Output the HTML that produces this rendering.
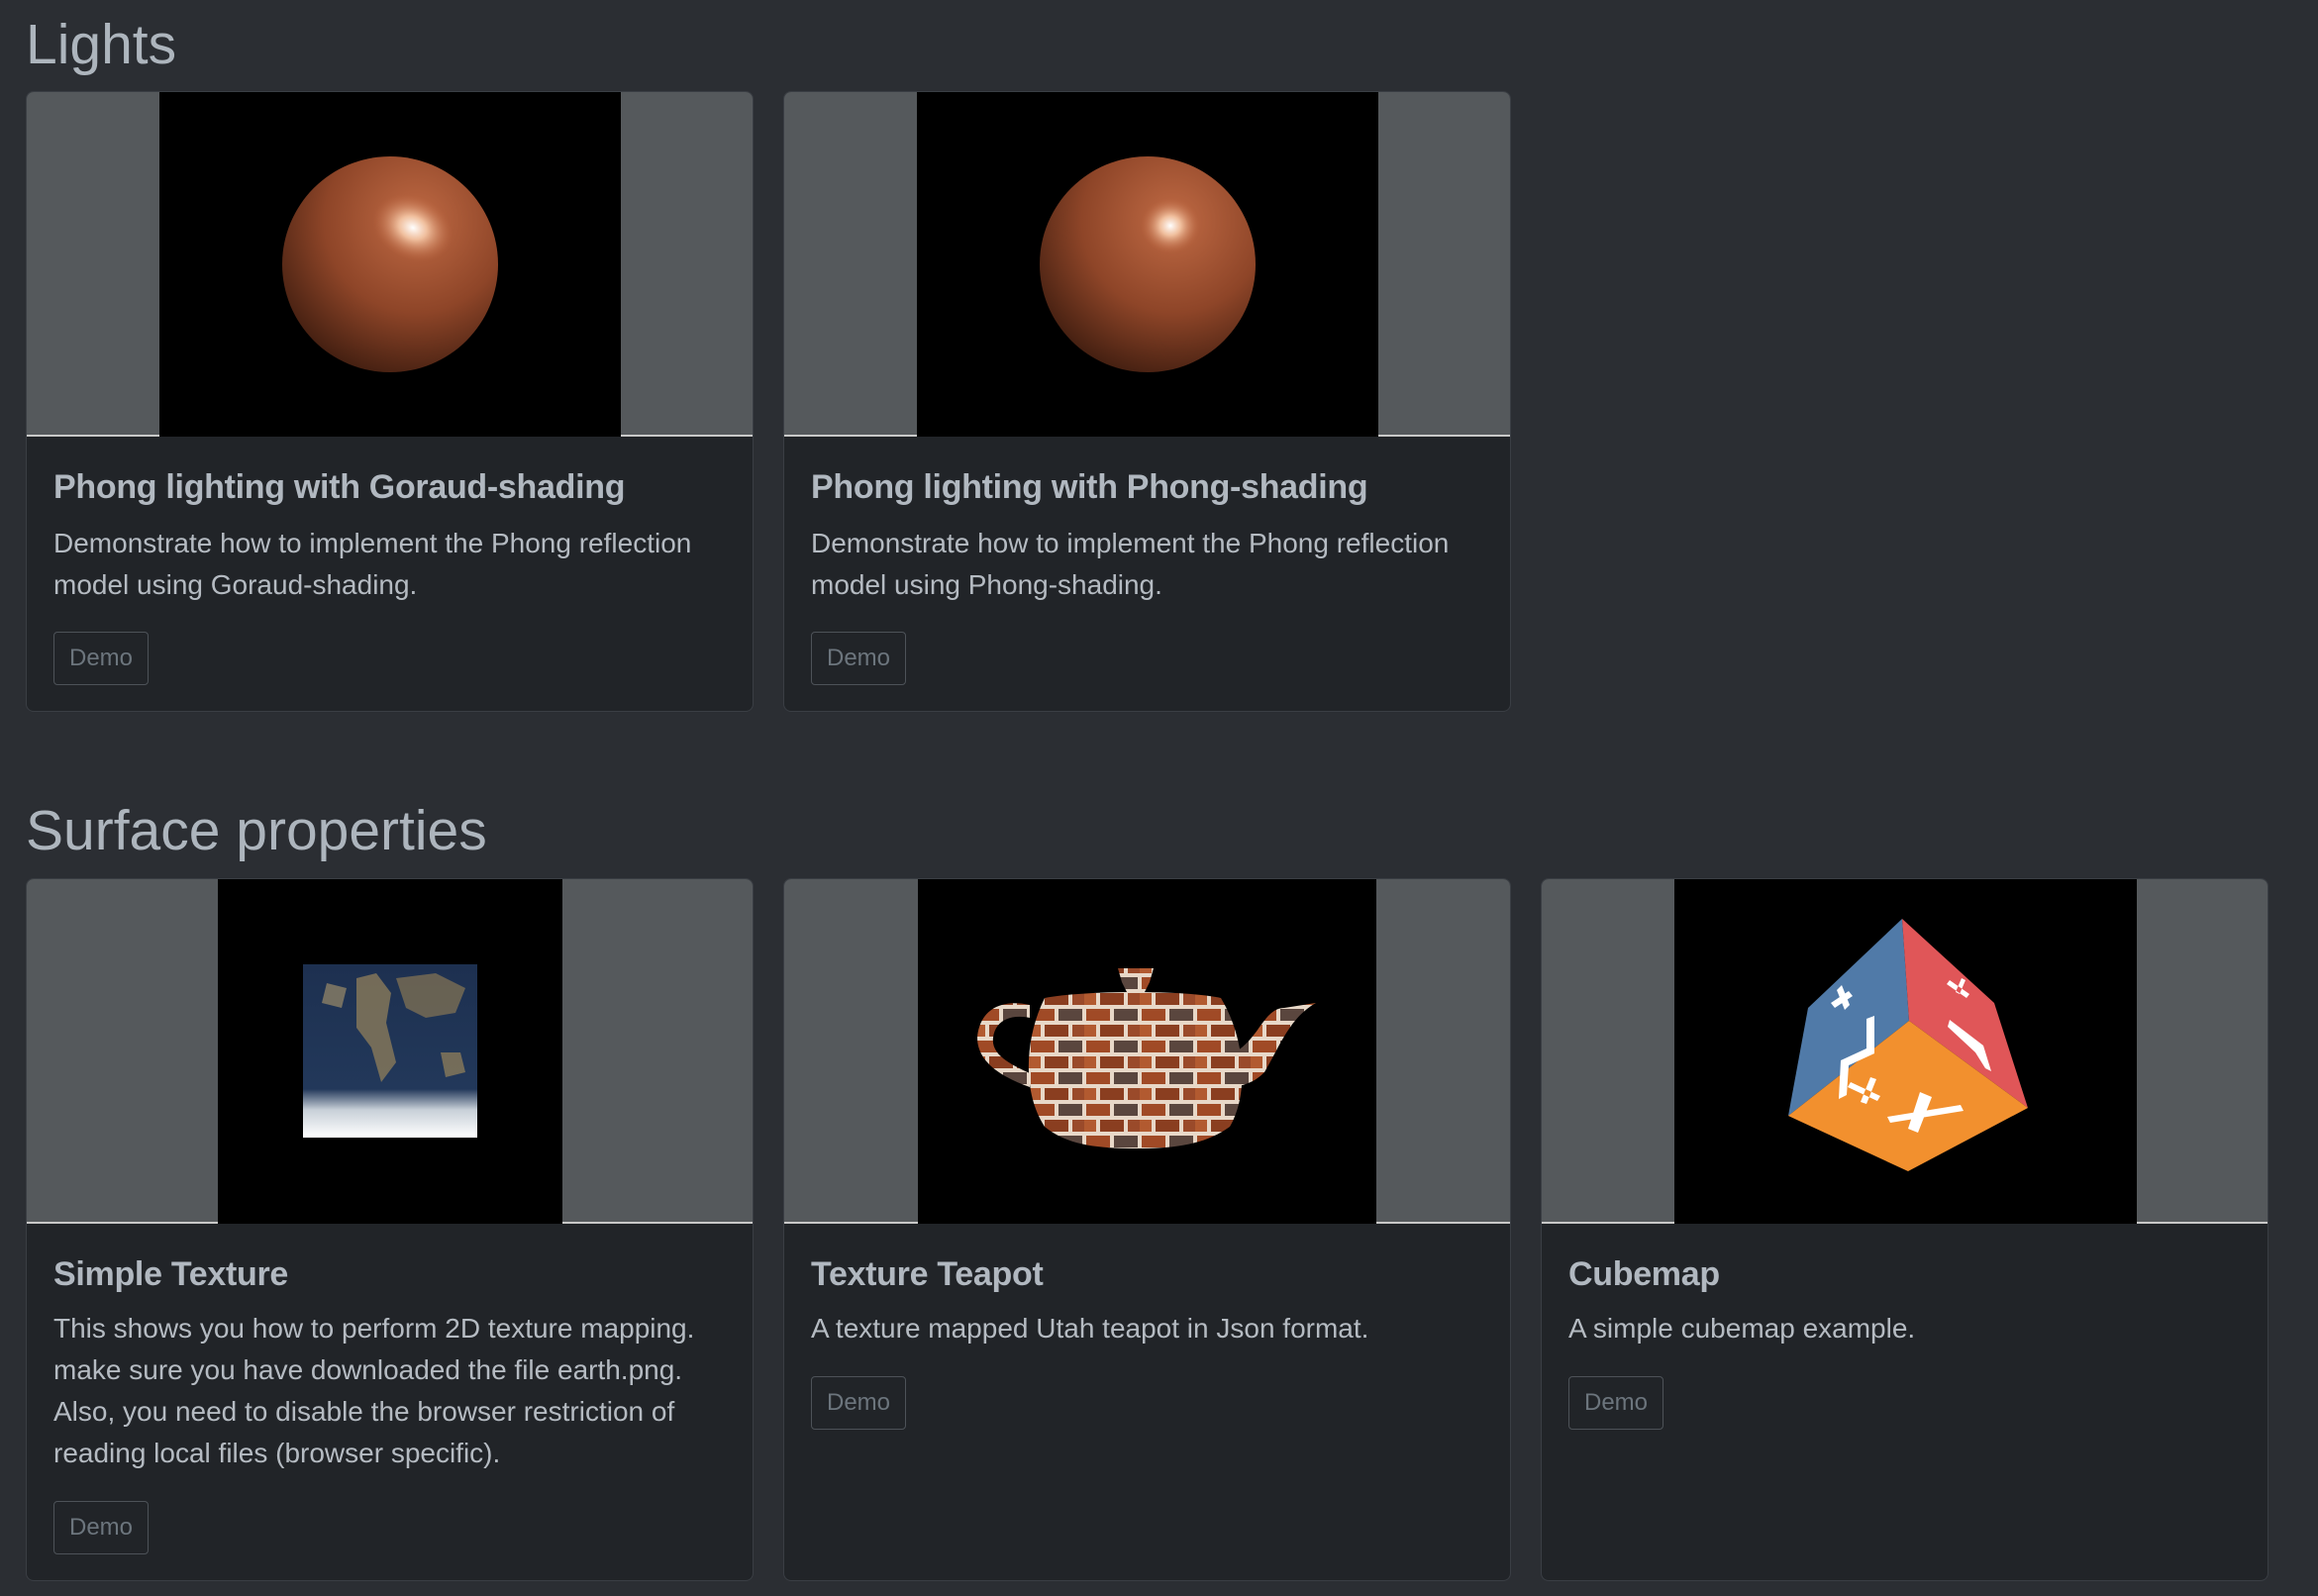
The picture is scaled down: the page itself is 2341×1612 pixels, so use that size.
<!DOCTYPE html>
<html><head><meta charset="utf-8"><style>
*{margin:0;padding:0;box-sizing:border-box}
body{width:2341px;height:1612px;background:#2b2e33;font-family:"Liberation Sans",sans-serif;position:relative;overflow:hidden}
h2{position:absolute;left:26px;color:#adb5bd;font-weight:normal;font-size:57px;line-height:1}
.card{position:absolute;width:735px;background:#212428;border:1px solid #3a3e44;border-radius:8px;overflow:hidden}
.img{position:relative;height:348px;background:#55595c;border-bottom:2px solid #c8c8c8}
.img svg{position:absolute;top:0;height:348px;background:#000}
.t{position:absolute;left:27px;color:#b1b8c0;font-size:34px;font-weight:bold;letter-spacing:-0.3px;white-space:nowrap}
.d{position:absolute;left:27px;width:665px;color:#b5bbc2;font-size:28px;line-height:42px}
.b{position:absolute;left:27px;width:96px;height:54px;border:1.5px solid #4d5258;border-radius:4px;color:#6c757d;font-size:24px;text-align:center;line-height:51px}
</style></head><body>
<svg width="0" height="0" style="position:absolute">
<defs>
<radialGradient id="sp" cx="0.62" cy="0.3" r="0.85"><stop offset="0" stop-color="#c06a44"/><stop offset="0.5" stop-color="#8e4528"/><stop offset="1" stop-color="#2a1209"/></radialGradient>
<radialGradient id="hl1" cx="0.5" cy="0.5" r="0.5"><stop offset="0" stop-color="#fff"/><stop offset="0.35" stop-color="#f6c9a8" stop-opacity="0.9"/><stop offset="1" stop-color="#c06a44" stop-opacity="0"/></radialGradient>
<pattern id="brick" width="56" height="32" patternUnits="userSpaceOnUse"><rect width="56" height="32" fill="#e8d8c8"/><rect x="2" y="3" width="24" height="12" fill="#a04a26"/><rect x="30" y="3" width="24" height="12" fill="#5a463e"/><rect x="-12" y="19" width="24" height="12" fill="#b25a30"/><rect x="16" y="19" width="24" height="12" fill="#8a3e20"/><rect x="44" y="19" width="24" height="12" fill="#9a4a2a"/></pattern>
<linearGradient id="ea" x1="0" y1="0" x2="0" y2="1"><stop offset="0" stop-color="#1d3050"/><stop offset="0.72" stop-color="#22385a"/><stop offset="0.84" stop-color="#c8d0d8"/><stop offset="1" stop-color="#fff"/></linearGradient>
</defs></svg>

<h2 style="top:17px">Lights</h2>

<div class="card" style="left:26px;top:92px;height:627px">
 <div class="img"><svg style="left:134px" width="466" viewBox="0 0 466 348">
  <circle cx="233" cy="174" r="109" fill="url(#sp)"/>
  <ellipse cx="256" cy="137" rx="42" ry="32" fill="url(#hl1)" transform="rotate(25 256 137)"/>
 </svg></div>
 <div class="t" style="top:380px">Phong lighting with Goraud-shading</div>
 <div class="d" style="top:435px">Demonstrate how to implement the Phong reflection model using Goraud-shading.</div>
 <div class="b" style="top:545px">Demo</div>
</div>

<div class="card" style="left:791px;top:92px;height:627px">
 <div class="img"><svg style="left:134px" width="466" viewBox="0 0 466 348">
  <circle cx="233" cy="174" r="109" fill="url(#sp)"/>
  <ellipse cx="256" cy="135" rx="30" ry="28" fill="url(#hl1)"/>
 </svg></div>
 <div class="t" style="top:380px">Phong lighting with Phong-shading</div>
 <div class="d" style="top:435px">Demonstrate how to implement the Phong reflection model using Phong-shading.</div>
 <div class="b" style="top:545px">Demo</div>
</div>

<h2 style="top:811px">Surface properties</h2>

<div class="card" style="left:26px;top:887px;height:710px">
 <div class="img"><svg style="left:193px" width="348" viewBox="0 0 348 348">
  <rect x="86" y="86" width="176" height="175" fill="url(#ea)"/>
  <path d="M140 100 l20 -5 l15 20 l-5 30 l10 40 l-15 20 l-10 -35 l-15 -20 z" fill="#8a7a5a" opacity="0.8"/>
  <path d="M180 100 l40 -5 l30 15 l-10 25 l-30 5 l-20 -10 z" fill="#7a6e54" opacity="0.8"/>
  <path d="M110 105 l20 5 l-5 20 l-20 -5 z" fill="#9a8a6a" opacity="0.7"/>
  <path d="M225 175 l20 0 l5 20 l-20 5 z" fill="#8a7a5a" opacity="0.8"/>
 </svg></div>
 <div class="t" style="top:380px">Simple Texture</div>
 <div class="d" style="top:433px">This shows you how to perform 2D texture mapping. make sure you have downloaded the file earth.png. Also, you need to disable the browser restriction of reading local files (browser specific).</div>
 <div class="b" style="top:628px">Demo</div>
</div>

<div class="card" style="left:791px;top:887px;height:710px">
 <div class="img"><svg style="left:135px" width="463" viewBox="0 0 463 348">
  <path d="M113 127 C80 120 62 135 60 160 C60 185 85 200 113 210 L113 196 C88 185 74 175 76 160 C78 142 95 136 113 140 Z" fill="url(#brick)"/>
  <path d="M320 175 C345 160 350 130 370 130 L402 125 C375 140 365 170 350 195 C340 205 330 208 318 210 Z" fill="url(#brick)"/>
  <path d="M202 90 L238 90 L234 104 L228 116 L212 116 L206 104 Z" fill="url(#brick)"/>
  <path d="M128 120 C170 112 270 112 306 120 C330 160 335 215 315 250 C290 268 260 272 220 272 C180 272 150 268 128 250 C105 215 108 160 128 120 Z" fill="url(#brick)"/>
 </svg></div>
 <div class="t" style="top:380px">Texture Teapot</div>
 <div class="d" style="top:433px">A texture mapped Utah teapot in Json format.</div>
 <div class="b" style="top:502px">Demo</div>
</div>

<div class="card" style="left:1556px;top:887px;height:710px">
 <div class="img"><svg style="left:134px" width="467" viewBox="0 0 467 348">
  <polygon points="230,40 135,130 115,239 237,143" fill="#507aa8"/>
  <polygon points="230,40 323,125 357,231 237,143" fill="#e05658"/>
  <polygon points="115,239 237,143 357,231 236,295" fill="#f2902e"/>
  <g fill="#fff">
   <path d="M168 183 l26 -12 l0 -30 l8 -3 l0 38 l-26 12 l-2 30 l-8 4 z"/>
   <path d="M158 125 l18 -12 l4 5 l-18 12 z M164 112 l5 -5 l8 20 l-5 5 z"/>
   <path d="M278 102 l20 14 l-3 4 l-20 -14 z M290 100 l-6 14 l4 2 l6 -14 z"/>
   <path d="M278 142 l34 26 l8 26 l-6 -3 l-10 -16 l-28 -26 z"/>
   <path d="M178 205 l30 14 l-3 5 l-30 -14 z M198 200 l-10 25 l6 2 l10 -25 z"/>
   <path d="M215 240 l74 -12 l3 6 l-74 12 z M248 215 l12 5 l-14 36 l-10 -4 z"/>
  </g>
 </svg></div>
 <div class="t" style="top:380px">Cubemap</div>
 <div class="d" style="top:433px">A simple cubemap example.</div>
 <div class="b" style="top:502px">Demo</div>
</div>
</body></html>
